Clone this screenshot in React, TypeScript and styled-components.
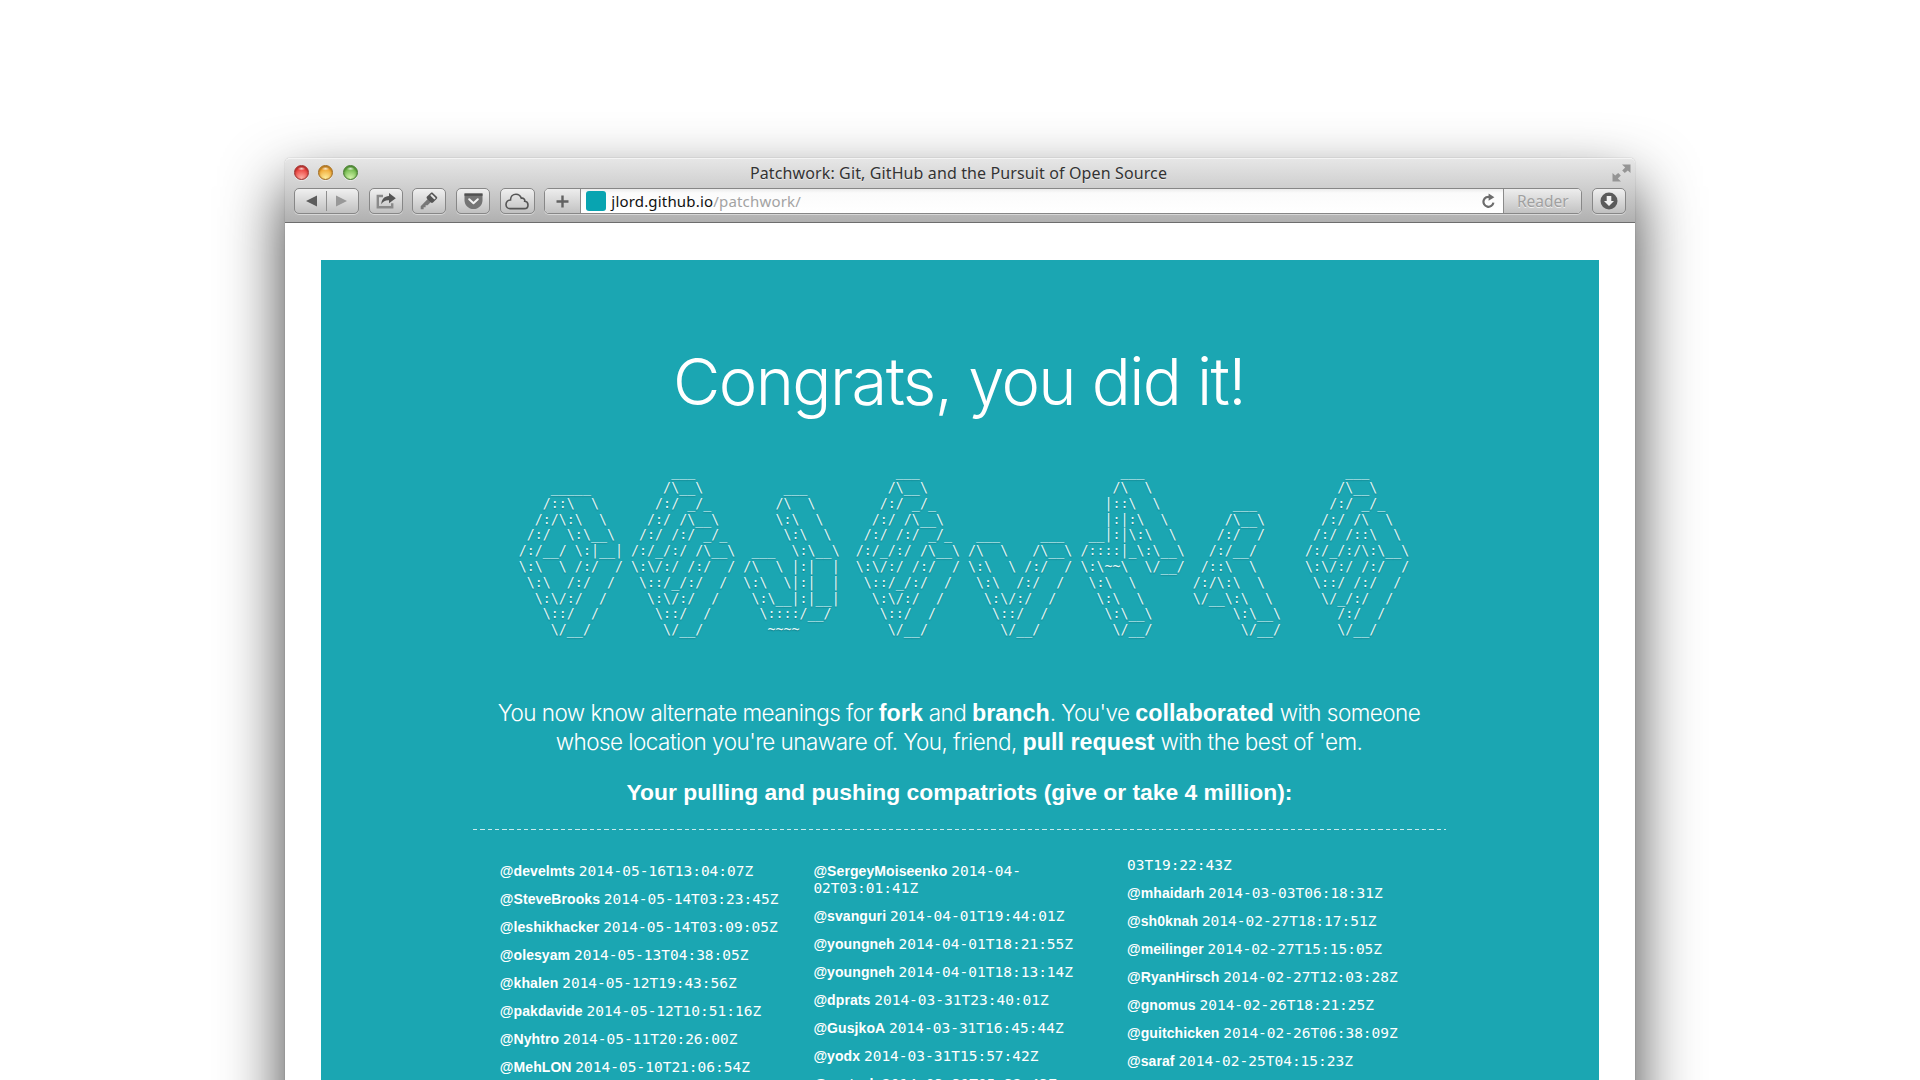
import React from 'react';
import styled, { createGlobalStyle } from 'styled-components';

const UI_FONT = '"Noto Sans", "Open Sans", sans-serif';
const BOLD_FONT = '"Liberation Sans", Arial, sans-serif';
const LIGHT_FONT = 'Inter, "Liberation Sans", sans-serif';
const MONO_FONT = '"DejaVu Sans Mono", "Liberation Mono", monospace';

const GlobalStyle = createGlobalStyle`
  body { margin: 0; background: #fff; }
  * { box-sizing: border-box; }
`;

const Desktop = styled.div`
  height: 1080px;
  padding-top: 158px;
  overflow: hidden;
`;

const Window = styled.div`
  width: 1350px;
  height: 1100px;
  margin: 0 auto;
  background: #fff;
  border-radius: 5px 5px 0 0;
  box-shadow: 0 0 1px rgba(0, 0, 0, 0.45), 0 28px 62px rgba(0, 0, 0, 0.76);
`;

const Chrome = styled.header`
  height: 65px;
  border-radius: 5px 5px 0 0;
  border-top: 1px solid #f4f4f4;
  border-bottom: 1px solid #6d6d6d;
  background: linear-gradient(#e6e6e6, #cfcfcf 45%, #b0b0b0);
`;

const TitleBar = styled.div`
  display: grid;
  grid-template-columns: 96px 1fr 104px;
  align-items: center;
  height: 29px;
  padding: 0 4px 2px 9px;
`;

const Lights = styled.div`
  display: flex;
  gap: 9.4px;
`;

const Light = styled.span<{ $rim: string; $top: string; $glow: string }>`
  width: 15px;
  height: 15px;
  border-radius: 50%;
  border: 1px solid ${(p) => p.$rim};
  background:
    radial-gradient(ellipse 4px 2px at 50% 20%, rgba(255, 255, 255, 0.85), transparent),
    radial-gradient(circle at 50% 95%, ${(p) => p.$glow}, ${(p) => p.$top} 70%);
  box-shadow: inset 0 1px 2px ${(p) => p.$rim}, 0 1px 0 rgba(255, 255, 255, 0.5);
`;

const Title = styled.div`
  text-align: center;
  font: 400 16px/24px ${UI_FONT};
  letter-spacing: 0.12px;
  color: #333;
  text-shadow: 0 1px 0 rgba(255, 255, 255, 0.5);
  white-space: nowrap;
`;

const TitleEnd = styled.div`
  display: flex;
  justify-content: flex-end;
`;

const Toolbar = styled.div`
  display: flex;
  gap: 9.7px;
  padding: 0 9px;
  height: 26px;
`;

const Button = styled.div<{ $w: number }>`
  display: flex;
  align-items: center;
  justify-content: center;
  width: ${(p) => p.$w}px;
  height: 26px;
  border: 1px solid #878787;
  border-radius: 5px;
  background: linear-gradient(#f0f0f0, #d8d8d8 50%, #c0c0c0);
  box-shadow: 0 1px 0 rgba(255, 255, 255, 0.45);
`;

const Split = styled.span`
  width: 1px;
  height: 20px;
  margin: 0 9px 0 9px;
  background: #8e8e8e;
`;

const AddressBar = styled.div`
  display: flex;
  flex: 1;
  height: 26px;
  border: 1px solid #878787;
  border-radius: 5px;
  overflow: hidden;
  background: linear-gradient(#ececec, #fbfbfb 4px, #fff);
  box-shadow: 0 1px 0 rgba(255, 255, 255, 0.45);
`;

const AddressEnd = styled.div<{ $w: number; $side: 'left' | 'right' }>`
  display: flex;
  align-items: center;
  justify-content: center;
  width: ${(p) => p.$w}px;
  border-${(p) => p.$side}: 1px solid #8a8a8a;
  background: linear-gradient(#ededed, #d8d8d8 50%, #c2c2c2);
  font: 400 15.5px/24px ${UI_FONT};
  color: #a0a0a0;
  text-shadow: 0 1px 0 rgba(255, 255, 255, 0.7);
`;

const Address = styled.div`
  display: flex;
  flex: 1;
  align-items: center;
  padding: 0 8px 0 4.6px;
  font: 400 15px/24px ${UI_FONT};
  letter-spacing: 0.18px;
  color: #a3a3a3;
`;

const Favicon = styled.span`
  width: 20px;
  height: 20px;
  margin-right: 5.8px;
  border-radius: 3px;
  background: #08a4b1;
`;

const Host = styled.span`
  color: #111;
`;

const Spacer = styled.span`
  flex: 1;
`;

const Page = styled.main`
  margin: 37px 36px 0;
  height: 1000px;
  padding-top: 82px;
  background: #1ba6b2;
  color: #fff;
`;

const Heading = styled.h1`
  margin: 0 2px 0 0;
  text-align: center;
  font: 300 65px/80px ${LIGHT_FONT};
  letter-spacing: -1.62px;
`;

const Art = styled.pre`
  margin: 42.2px 0 0 197.7px;
  font: 400 13.33px/15.8px ${MONO_FONT};
  text-shadow: 0 1px 1px rgba(0, 60, 70, 0.35);
  color: #e4f6f7;
`;

const Lead = styled.p`
  margin: 60.2px 2px 0 0;
  text-align: center;
  font: 350 22.5px/29.1px ${LIGHT_FONT};
  letter-spacing: -0.54px;

  b {
    font: 700 23.3px/20px ${BOLD_FONT};
    letter-spacing: 0;
  }
`;

const Subheading = styled.h3`
  margin: 21.4px 1px 0 0;
  text-align: center;
  font: 700 22.85px/28px ${BOLD_FONT};
`;

const Rule = styled.div`
  height: 1.4px;
  margin: 23px 153px 0 152px;
  background: repeating-linear-gradient(90deg, #c9ebee 0 4.3px, transparent 4.3px 7.3px);
`;

const Columns = styled.div`
  display: grid;
  grid-template-columns: repeat(3, 313.6px);
  margin: 26.9px 0 0 178.8px;
`;

const List = styled.ul<{ $offset: number }>`
  list-style: none;
  margin: 0;
  padding: ${(p) => p.$offset}px 0 0;
`;

const Entry = styled.li`
  margin-bottom: 11px;
  font: 400 14.5px/17px ${MONO_FONT};
  white-space: pre-line;

  b {
    font: 700 14px/14px ${BOLD_FONT};
    letter-spacing: 0.08px;
    margin-right: 3.8px;
  }
`;

/* Each glyph of the banner sits in a 14-character cell, 11 lines tall. */
const R = String.raw;
const B = [
  R`     ___`, R`    /\__\ `, R`   /:/ _/_`, R`  /:/ /\__\ `, R` /:/ /:/ _/_`, R`/:/_/:/ /\__\ `,
  R`\:\/:/ /:/  /`, R` \::/_/:/  /`, R`  \:\/:/  /`, R`   \::/  /`, R`    \/__/`,
];
const GLYPHS: string[][] = [
  [
    '', R`    _____`, R`   /::\  \ `, R`  /:/\:\  \ `, R` /:/  \:\__\ `, R`/:/__/ \:|__|`,
    R`\:\  \ /:/  /`, R` \:\  /:/  /`, R`  \:\/:/  /`, R`   \::/  /`, R`    \/__/`,
  ],
  B,
  [
    '', R`     ___`, R`    /\  \ `, R`    \:\  \ `, R`     \:\  \ `, R` ___  \:\__\ `,
    R`/\  \ |:|  |`, R`\:\  \|:|  |`, R` \:\__|:|__|`, R`  \::::/__/`, R`   ~~~~`,
  ],
  B,
  [
    '', '', '', '', R` ___     ___`, R`/\  \   /\__\ `,
    R`\:\  \ /:/  /`, R` \:\  /:/  /`, R`  \:\/:/  /`, R`   \::/  /`, R`    \/__/`,
  ],
  [
    R`     ___`, R`    /\  \ `, R`   |::\  \ `, R`   |:|:\  \ `, R` __|:|\:\  \ `, R`/::::|_\:\__\ `,
    R`\:\~~\  \/__/`, R` \:\  \ `, R`  \:\  \ `, R`   \:\__\ `, R`    \/__/`,
  ],
  [
    '', '', R`     ___`, R`    /\__\ `, R`   /:/  /`, R`  /:/__/`,
    R` /::\  \ `, R`/:/\:\  \ `, R`\/__\:\  \ `, R`     \:\__\ `, R`      \/__/`,
  ],
  [
    R`     ___`, R`    /\__\ `, R`   /:/ _/_`, R`  /:/ /\  \ `, R` /:/ /::\  \ `, R`/:/_/:/\:\__\ `,
    R`\:\/:/ /:/  /`, R` \::/ /:/  /`, R`  \/_/:/  /`, R`    /:/  /`, R`    \/__/`,
  ],
];
const banner = Array.from({ length: 11 }, (_, row) =>
  GLYPHS.map((g) => g[row].padEnd(14).slice(0, 14)).join(''),
).join('\n');

type Item = [name: string, date: string];
const COLUMNS: { offset: number; items: Item[] }[] = [
  {
    offset: 6.1,
    items: [
      ['@develmts', '2014-05-16T13:04:07Z'],
      ['@SteveBrooks', '2014-05-14T03:23:45Z'],
      ['@leshikhacker', '2014-05-14T03:09:05Z'],
      ['@olesyam', '2014-05-13T04:38:05Z'],
      ['@khalen', '2014-05-12T19:43:56Z'],
      ['@pakdavide', '2014-05-12T10:51:16Z'],
      ['@Nyhtro', '2014-05-11T20:26:00Z'],
      ['@MehLON', '2014-05-10T21:06:54Z'],
    ],
  },
  {
    offset: 6.1,
    items: [
      ['@SergeyMoiseenko', '2014-04-\n02T03:01:41Z'],
      ['@svanguri', '2014-04-01T19:44:01Z'],
      ['@youngneh', '2014-04-01T18:21:55Z'],
      ['@youngneh', '2014-04-01T18:13:14Z'],
      ['@dprats', '2014-03-31T23:40:01Z'],
      ['@GusjkoA', '2014-03-31T16:45:44Z'],
      ['@yodx', '2014-03-31T15:57:42Z'],
      ['@partech', '2014-03-31T05:32:43Z'],
    ],
  },
  {
    offset: 0,
    items: [
      ['', '03T19:22:43Z'],
      ['@mhaidarh', '2014-03-03T06:18:31Z'],
      ['@sh0knah', '2014-02-27T18:17:51Z'],
      ['@meilinger', '2014-02-27T15:15:05Z'],
      ['@RyanHirsch', '2014-02-27T12:03:28Z'],
      ['@gnomus', '2014-02-26T18:21:25Z'],
      ['@guitchicken', '2014-02-26T06:38:09Z'],
      ['@saraf', '2014-02-25T04:15:23Z'],
    ],
  },
];

const BackIcon = () => (
  <svg width="11" height="12" viewBox="0 0 11 12"><path d="M11 0.5v11L0 6z" fill="#5c5c5c" /></svg>
);
const ForwardIcon = () => (
  <svg width="11" height="12" viewBox="0 0 11 12"><path d="M0 0.5v11L11 6z" fill="#989898" /></svg>
);
const ShareIcon = () => (
  <svg width="20" height="18" viewBox="0 0 20 18">
    <path d="M7 4H1.8v11.2h14.4v-4" fill="none" stroke="#8a8a8a" strokeWidth="2.4" />
    <path d="M5.2 12.2C5.6 7 8.4 4.1 13 3.9V1l6.8 5.2-6.8 5V8.2c-3.4-.2-5.8 1-7.8 4z" fill="#555" />
  </svg>
);
const KeyIcon = () => (
  <svg width="18" height="18" viewBox="0 0 18 18">
    <path d="M8.2 6.600L.7 14.200v3h2.900v-1.900h2v-2.100h2l4-4z" fill="#777" />
    <path
      d="M7 4.600L10.800.9c.6-.6 1.500-.6 2.100 0l3.900 3.800c.6.6.6 1.500 0 2.100L13 10.500c-.6.6-1.500.6-2.100 0L7 6.700c-.6-.6-.6-1.500 0-2.100z"
      fill="#555"
    />
    <path d="M11.500 3.200l3 3" stroke="#e6e6e6" strokeWidth="2" strokeLinecap="round" />
  </svg>
);
const PocketIcon = () => (
  <svg width="19" height="17" viewBox="0 0 19 17">
    <path d="M.5.5h18v6.700c0 5-4 8.800-9 8.800s-9-3.800-9-8.800z" fill="#747474" />
    <path d="M.5.5h18v2.300H.5z" fill="#505050" />
    <path d="M5.200 6.200l4.300 4 4.300-4" fill="none" stroke="#f2f2f2" strokeWidth="2" strokeLinecap="round" strokeLinejoin="round" />
  </svg>
);
const CloudIcon = () => (
  <svg width="24" height="17" viewBox="0 0 24 17">
    <path
      d="M5 15.600h14.300c2.200 0 3.700-1.700 3.700-3.700 0-2.200-1.500-3.500-3.300-3.700.4-1.900-1.300-3.500-3.400-2.900C15.400 2.600 13.300 1.300 11 1.300c-3.200 0-5.500 2.400-5.500 5.700C2.900 6.900 1 8.900 1 11.400c0 2.400 1.700 4.200 4 4.200z"
      fill="none"
      stroke="#555"
      strokeWidth="1.600"
    />
  </svg>
);
const PlusIcon = () => (
  <svg width="13" height="13" viewBox="0 0 13 13">
    <path d="M6.500 0.500v12M0.500 6.500h12" stroke="#626262" strokeWidth="2.400" />
  </svg>
);
const ReloadIcon = () => (
  <svg width="13" height="16" viewBox="0 0 13 16">
    <path d="M8.200 4.100A5 5 0 1 0 11.400 9.600" fill="none" stroke="#6c6c6c" strokeWidth="2.200" />
    <path d="M6.600 0.500l5.800 3.800-5.800 3.400z" fill="#6c6c6c" />
  </svg>
);
const DownloadIcon = () => (
  <svg width="18" height="18" viewBox="0 0 18 18">
    <circle cx="9" cy="9" r="8.500" fill="#5b5b5b" />
    <path d="M6.700 4h4.600v5h2.700L9 14 4 9h2.700z" fill="#f1f1f1" />
  </svg>
);
const FullScreenIcon = () => (
  <svg width="19" height="18" viewBox="0 0 19 18">
    <path d="M10 .5h8.500V9l-2.700-2.600-3 2.600-2.600-2.500 3-3zM9 17.500H.5V9l2.700 2.600 3-2.600 2.600 2.500-3 3z" fill="#959595" />
  </svg>
);

export default function App() {
  return (
    <>
      <GlobalStyle />
      <Desktop>
        <Window>
          <Chrome>
            <TitleBar>
              <Lights>
                <Light $rim="#9c2f2c" $top="#ea3c38" $glow="#ffb3a8" />
                <Light $rim="#a0691c" $top="#f0a530" $glow="#fff0a0" />
                <Light $rim="#43782c" $top="#6fb84a" $glow="#d8f7b0" />
              </Lights>
              <Title>Patchwork: Git, GitHub and the Pursuit of Open Source</Title>
              <TitleEnd><FullScreenIcon /></TitleEnd>
            </TitleBar>
            <Toolbar>
              <Button $w={65}><BackIcon /><Split /><ForwardIcon /></Button>
              <Button $w={34}><ShareIcon /></Button>
              <Button $w={34}><KeyIcon /></Button>
              <Button $w={34}><PocketIcon /></Button>
              <Button $w={35}><CloudIcon /></Button>
              <AddressBar>
                <AddressEnd $w={35.5} $side="right"><PlusIcon /></AddressEnd>
                <Address>
                  <Favicon />
                  <Host>jlord.github.io</Host>
                  <span>/patchwork/</span>
                  <Spacer />
                  <ReloadIcon />
                </Address>
                <AddressEnd $w={78} $side="left">Reader</AddressEnd>
              </AddressBar>
              <Button $w={34}><DownloadIcon /></Button>
            </Toolbar>
          </Chrome>
          <Page>
            <Heading>Congrats, you did it!</Heading>
            <Art>{banner}</Art>
            <Lead>
              You now know alternate meanings for <b>fork</b> and <b>branch</b>. You've <b>collaborated</b> with someone
              <br />
              whose location you're unaware of. You, friend, <b>pull request</b> with the best of 'em.
            </Lead>
            <Subheading>Your pulling and pushing compatriots (give or take 4 million):</Subheading>
            <Rule />
            <Columns>
              {COLUMNS.map((column, i) => (
                <List key={i} $offset={column.offset}>
                  {column.items.map(([name, date]) => (
                    <Entry key={name + date}>
                      {name && <b>{name}</b>}
                      {date}
                    </Entry>
                  ))}
                </List>
              ))}
            </Columns>
          </Page>
        </Window>
      </Desktop>
    </>
  );
}
